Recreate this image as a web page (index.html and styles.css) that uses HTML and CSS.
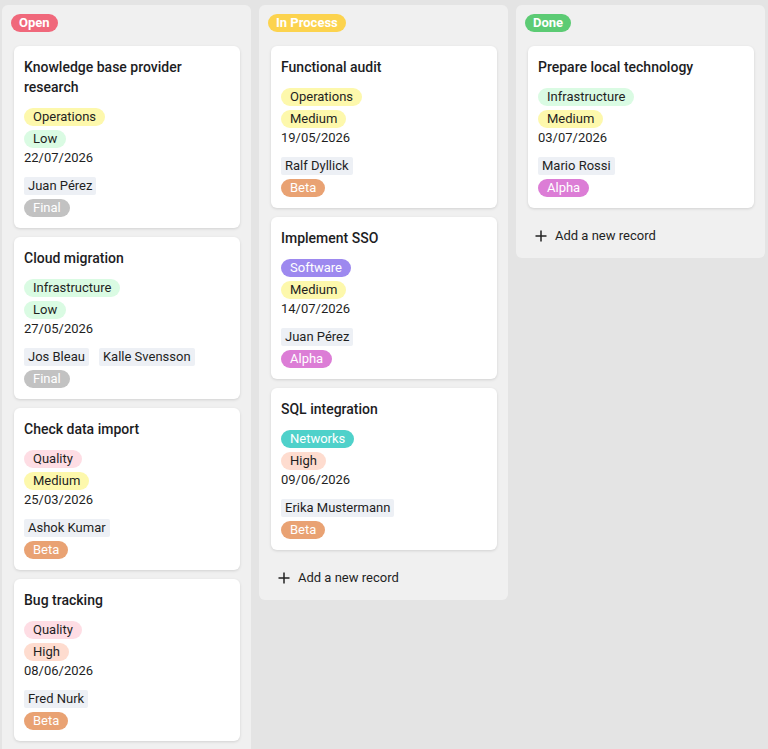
FILE: index.html
```html
<!DOCTYPE html>
<html lang="en">
<head>
  <meta charset="UTF-8" />
  <meta name="viewport" content="width=device-width, initial-scale=1.0" />
  <title>Kanban</title>
  <link rel="stylesheet" href="styles.css">
</head>
<body>
  <div class="board">

    <!-- Open -->
    <section class="coluna">
      <div class="coluna-topo"><span class="estado estado-open">Open</span></div>
      <div class="cartoes">
        <article class="cartao">
          <h3>Knowledge base provider research</h3>
          <div class="tags">
            <span class="tag amarelo">Operations</span>
            <span class="tag verde">Low</span>
          </div>
          <div class="data">22/07/2026</div>
          <div class="pessoas"><span class="pessoa">Juan Pérez</span></div>
          <div class="tags"><span class="tag final">Final</span></div>
        </article>

        <article class="cartao">
          <h3>Cloud migration</h3>
          <div class="tags">
            <span class="tag verde">Infrastructure</span>
            <span class="tag verde">Low</span>
          </div>
          <div class="data">27/05/2026</div>
          <div class="pessoas">
            <span class="pessoa">Jos Bleau</span>
            <span class="pessoa">Kalle Svensson</span>
          </div>
          <div class="tags"><span class="tag final">Final</span></div>
        </article>

        <article class="cartao">
          <h3>Check data import</h3>
          <div class="tags">
            <span class="tag rosa">Quality</span>
            <span class="tag amarelo">Medium</span>
          </div>
          <div class="data">25/03/2026</div>
          <div class="pessoas"><span class="pessoa">Ashok Kumar</span></div>
          <div class="tags"><span class="tag beta">Beta</span></div>
        </article>

        <article class="cartao">
          <h3>Bug tracking</h3>
          <div class="tags">
            <span class="tag rosa">Quality</span>
            <span class="tag pessego">High</span>
          </div>
          <div class="data">08/06/2026</div>
          <div class="pessoas"><span class="pessoa">Fred Nurk</span></div>
          <div class="tags"><span class="tag beta">Beta</span></div>
        </article>
      </div>
      <div class="novo">
        <svg width="12" height="12" viewBox="0 0 12 12"><path d="M6 0.5v11M0.5 6h11" stroke="#222" stroke-width="1.5"/></svg>
        Add a new record
      </div>
    </section>

    <!-- In Process -->
    <section class="coluna">
      <div class="coluna-topo"><span class="estado estado-process">In Process</span></div>
      <div class="cartoes">
        <article class="cartao">
          <h3>Functional audit</h3>
          <div class="tags">
            <span class="tag amarelo">Operations</span>
            <span class="tag amarelo">Medium</span>
          </div>
          <div class="data">19/05/2026</div>
          <div class="pessoas"><span class="pessoa">Ralf Dyllick</span></div>
          <div class="tags"><span class="tag beta">Beta</span></div>
        </article>

        <article class="cartao">
          <h3>Implement SSO</h3>
          <div class="tags">
            <span class="tag software">Software</span>
            <span class="tag amarelo">Medium</span>
          </div>
          <div class="data">14/07/2026</div>
          <div class="pessoas"><span class="pessoa">Juan Pérez</span></div>
          <div class="tags"><span class="tag alpha">Alpha</span></div>
        </article>

        <article class="cartao">
          <h3>SQL integration</h3>
          <div class="tags">
            <span class="tag networks">Networks</span>
            <span class="tag pessego">High</span>
          </div>
          <div class="data">09/06/2026</div>
          <div class="pessoas"><span class="pessoa">Erika Mustermann</span></div>
          <div class="tags"><span class="tag beta">Beta</span></div>
        </article>
      </div>
      <div class="novo">
        <svg width="12" height="12" viewBox="0 0 12 12"><path d="M6 0.5v11M0.5 6h11" stroke="#222" stroke-width="1.5"/></svg>
        Add a new record
      </div>
    </section>

    <!-- Done -->
    <section class="coluna">
      <div class="coluna-topo"><span class="estado estado-done">Done</span></div>
      <div class="cartoes">
        <article class="cartao">
          <h3>Prepare local technology</h3>
          <div class="tags">
            <span class="tag verde">Infrastructure</span>
            <span class="tag amarelo">Medium</span>
          </div>
          <div class="data">03/07/2026</div>
          <div class="pessoas"><span class="pessoa">Mario Rossi</span></div>
          <div class="tags"><span class="tag alpha">Alpha</span></div>
        </article>
      </div>
      <div class="novo">
        <svg width="12" height="12" viewBox="0 0 12 12"><path d="M6 0.5v11M0.5 6h11" stroke="#222" stroke-width="1.5"/></svg>
        Add a new record
      </div>
    </section>

  </div>
</body>
</html>
```

FILE: styles.css
```css
body {
  margin: 0;
  background: #e4e4e4;
  color: #1f1f1f;
  font-family: Roboto, "Liberation Sans", Arial, sans-serif;
  font-size: 13px;
}

.board {
  display: grid;
  grid-template-columns: repeat(3, 249px);
  gap: 8px;
  padding: 5px 2px;
  align-items: start;
}

.coluna {
  background: #f0f0f0;
  border-radius: 6px;
  padding: 9px 11px 2px 12px;
}

.coluna-topo {
  margin-left: -3px;
  margin-bottom: 14px;
  height: 18px;
}

.estado {
  display: inline-block;
  height: 18px;
  line-height: 18px;
  padding: 0 8px;
  border-radius: 9px;
  color: #fff;
  font-weight: bold;
  font-size: 13px;
}

.estado-open { background: #f0687b; }
.estado-process { background: #fcd34e; }
.estado-done { background: #5ccb74; }

.cartoes {
  display: flex;
  flex-direction: column;
  gap: 9px;
}

.cartao {
  background: #fff;
  border-radius: 6px;
  padding: 11px 10px 11px 10px;
  box-shadow: 0 1px 3px rgba(0, 0, 0, 0.13);
}

.cartao h3 {
  margin: 0 0 11px 0;
  font-size: 14px;
  font-weight: 500;
  line-height: 20px;
  color: #1d1d1f;
}

.tags {
  display: flex;
  flex-direction: column;
  align-items: flex-start;
  gap: 4px;
}

.tag {
  display: inline-block;
  height: 18px;
  line-height: 18px;
  padding: 0 9px;
  border-radius: 9px;
  white-space: nowrap;
}

.amarelo { background: #fdf8ac; }
.verde { background: #dafbe3; }
.rosa { background: #fedde4; }
.pessego { background: #fedccf; }
.software { background: #9d89ef; color: #fff; }
.networks { background: #4fd1ca; color: #fff; }
.final { background: #c2c2c2; color: #fff; }
.beta { background: #e9a273; color: #fff; }
.alpha { background: #dc7dd6; color: #fff; }

.data {
  line-height: 20px;
  margin-bottom: 9px;
}

.pessoas {
  display: flex;
  gap: 10px;
  margin-bottom: 4px;
}

.pessoa {
  height: 18px;
  line-height: 18px;
  padding: 0 4px;
  background: #edf0f5;
  border-radius: 2px;
}

.novo {
  display: flex;
  align-items: center;
  gap: 8px;
  margin-top: 8px;
  padding: 10px 7px;
  line-height: 20px;
}
```
